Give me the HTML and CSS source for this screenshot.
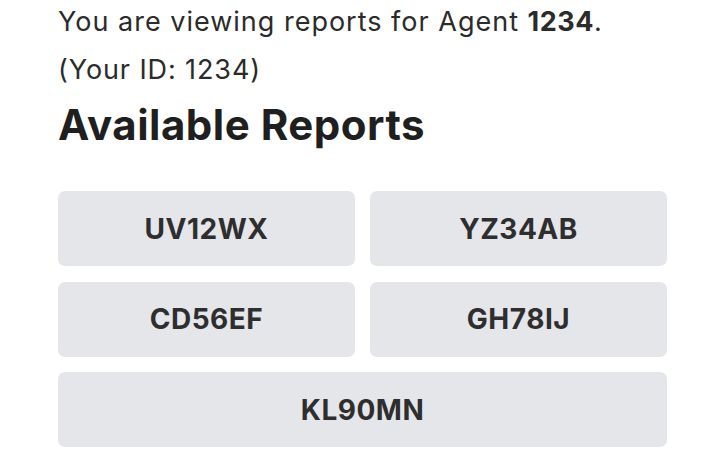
FILE: index.html
```html
<!DOCTYPE html>
<html lang="en">
<head>
<meta charset="utf-8">
<title>Available Reports</title>
<link rel="stylesheet" href="styles.css">
</head>
<body>
<main class="page">
  <p class="intro">You are viewing reports for Agent <strong>1234</strong>.</p>
  <p class="intro intro-id">(Your ID: 1234)</p>
  <h1 class="title">Available Reports</h1>
  <div class="reports">
    <button class="report">UV12WX</button>
    <button class="report">YZ34AB</button>
    <button class="report">CD56EF</button>
    <button class="report">GH78IJ</button>
    <button class="report report-wide">KL90MN</button>
  </div>
</main>
</body>
</html>
```

FILE: styles.css
```css
html, body {
  margin: 0;
  padding: 0;
  background: #ffffff;
}
body {
  font-family: Inter, "Noto Sans", "Liberation Sans", sans-serif;
  color: #2a2a2a;
}
.page {
  width: 609px;
  padding-left: 58px;
}
.intro {
  margin: 0;
  font-size: 27px;
  line-height: 44px;
  letter-spacing: 1px;
  color: #2b2b2b;
}
.intro strong {
  font-weight: 700;
  letter-spacing: 0.5px;
}
.intro-id {
  margin-top: 4px;
  letter-spacing: 0.9px;
}
.title {
  margin: 8px 0 0;
  font-size: 42px;
  line-height: 50px;
  letter-spacing: 0.5px;
  font-weight: 700;
  color: #1f1f1f;
}
.reports {
  margin-top: 41px;
  display: grid;
  grid-template-columns: 1fr 1fr;
  column-gap: 15px;
  row-gap: 15.5px;
}
.report {
  height: 75px;
  border: none;
  border-radius: 7px;
  background: #e4e6ea;
  font-family: inherit;
  font-size: 28px;
  font-weight: 700;
  letter-spacing: 0.5px;
  color: #2e2e2e;
  padding: 0;
}
.report-wide {
  grid-column: 1 / span 2;
}
```
